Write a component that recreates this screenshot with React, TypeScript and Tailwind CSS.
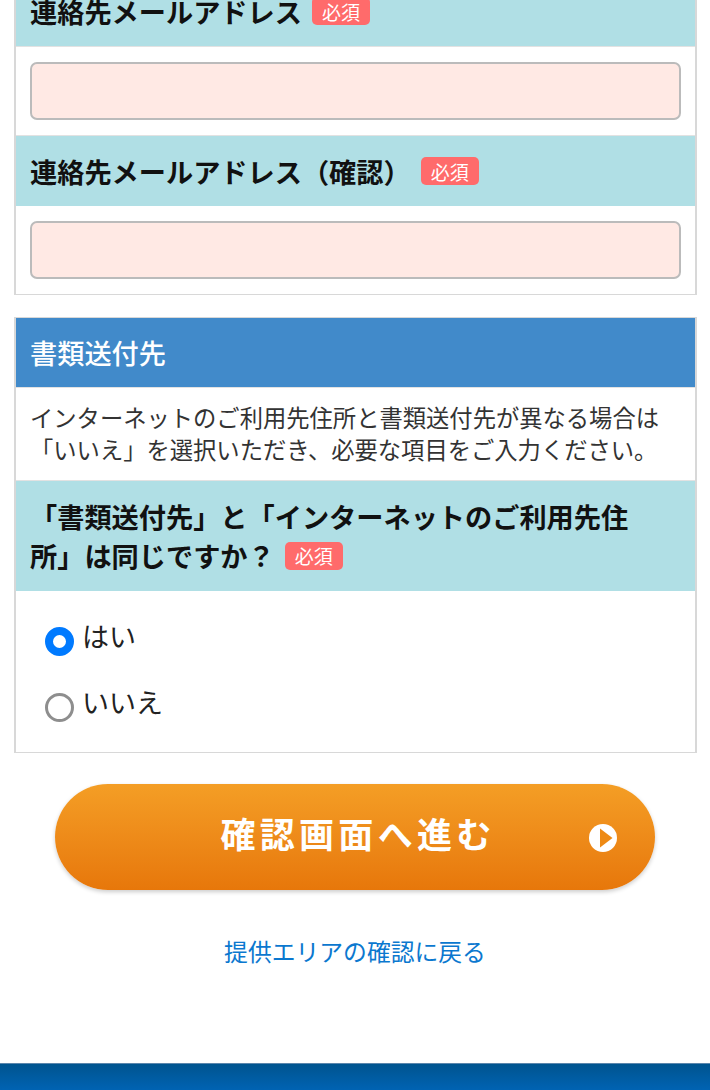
import React from 'react';

const Required = () => (
  <span className="inline-flex items-center justify-center w-[58px] h-[28px] ml-[10px] rounded-[5px] bg-[#ff6b6b] text-white text-[19px] font-normal leading-none">
    必須
  </span>
);

const FieldHead: React.FC<{ children: React.ReactNode }> = ({ children }) => (
  <div className="flex items-center h-[70px] px-[14px] bg-[#b0dfe5] text-[27.2px] font-bold text-[#111]">
    {children}
  </div>
);

const MailInput = () => (
  <div className="px-[14px] py-[15px] bg-white">
    <input
      type="text"
      className="block w-full h-[58px] rounded-[7px] border-2 border-[#bbb] bg-[#ffe9e4]"
    />
  </div>
);

const Radio: React.FC<{ checked?: boolean; label: string }> = ({ checked, label }) => (
  <div className="flex items-start h-[66px]">
    {checked ? (
      <span className="ml-[1px] mt-[13px] w-[29px] h-[29px] rounded-full border-[8px] border-[#007aff] bg-white" />
    ) : (
      <span className="ml-[1px] mt-[13px] w-[29px] h-[29px] rounded-full border-[3px] border-[#8e8e8e] bg-white" />
    )}
    <span className="ml-[8px] mt-[4px] text-[27px] leading-[36px] text-[#222]">{label}</span>
  </div>
);

export default function App() {
  return (
    <div className="w-[710px] h-[1090px] overflow-hidden bg-white font-['Noto_Sans_CJK_JP','Noto_Sans',sans-serif]">
      <div className="mt-[-24px] ml-[14px] w-[683px] border-x-2 border-b border-[#d8d8d8]">
        <FieldHead>
          連絡先メールアドレス
          <Required />
        </FieldHead>
        <div className="border-t border-[#e2e2e2]">
          <MailInput />
        </div>
        <div className="border-t border-[#e2e2e2]">
          <FieldHead>
            連絡先メールアドレス（確認）
            <Required />
          </FieldHead>
        </div>
        <MailInput />
      </div>

      <div className="mt-[22px] ml-[14px] w-[683px] border-x-2 border-y border-[#d8d8d8]">
        <div className="flex items-center h-[69px] px-[14px] bg-[#418aca] text-[27.2px] font-medium text-white">
          書類送付先
        </div>
        <div className="border-t border-[#e2e2e2] px-[14px] pt-[13px] h-[93px] text-[23.3px] text-[#333]">
          <div className="leading-[32px] whitespace-nowrap">
            インターネットのご利用先住所と書類送付先が異なる場合は
            <br />
            「いいえ」を選択いただき、必要な項目をご入力ください。
          </div>
        </div>
        <div className="border-t border-[#e2e2e2] bg-[#b0dfe5] h-[111px] px-[14px] pt-[16px] text-[27.2px] font-bold text-[#111]">
          <div className="leading-[39px] whitespace-nowrap">「書類送付先」と「インターネットのご利用先住</div>
          <div className="flex items-center h-[39px]">
            所」は同じですか？
            <Required />
          </div>
        </div>
        <div className="px-[28px] pt-[23px] h-[161px] bg-white">
          <Radio checked label="はい" />
          <Radio label="いいえ" />
        </div>
      </div>

      <div className="mt-[31px] flex justify-center">
        <div className="relative flex items-center justify-center w-[600px] h-[106px] pb-[8px] rounded-full bg-gradient-to-b from-[#f49e25] to-[#e7770a] shadow-[0_2px_4px_rgba(0,0,0,0.2)]">
          <span className="ml-[6px] text-[35px] font-bold tracking-[4.3px] text-white">確認画面へ進む</span>
          <svg className="absolute right-[38px] top-[40px]" width="28" height="28" viewBox="0 0 28 28">
            <circle cx="14" cy="14" r="14" fill="#fff" />
            <path d="M11 4.5 L23.5 14 L11 23.5 Z" fill="#ee8a14" />
          </svg>
        </div>
      </div>

      <div className="mt-[43px] text-center text-[23.8px] leading-[36px] text-[#0b78cf]">提供エリアの確認に戻る</div>

      <div className="mt-[94px] h-[27px] border-t border-[#5a86ad] bg-gradient-to-b from-[#00548f] to-[#0063b3]" />
    </div>
  );
}
